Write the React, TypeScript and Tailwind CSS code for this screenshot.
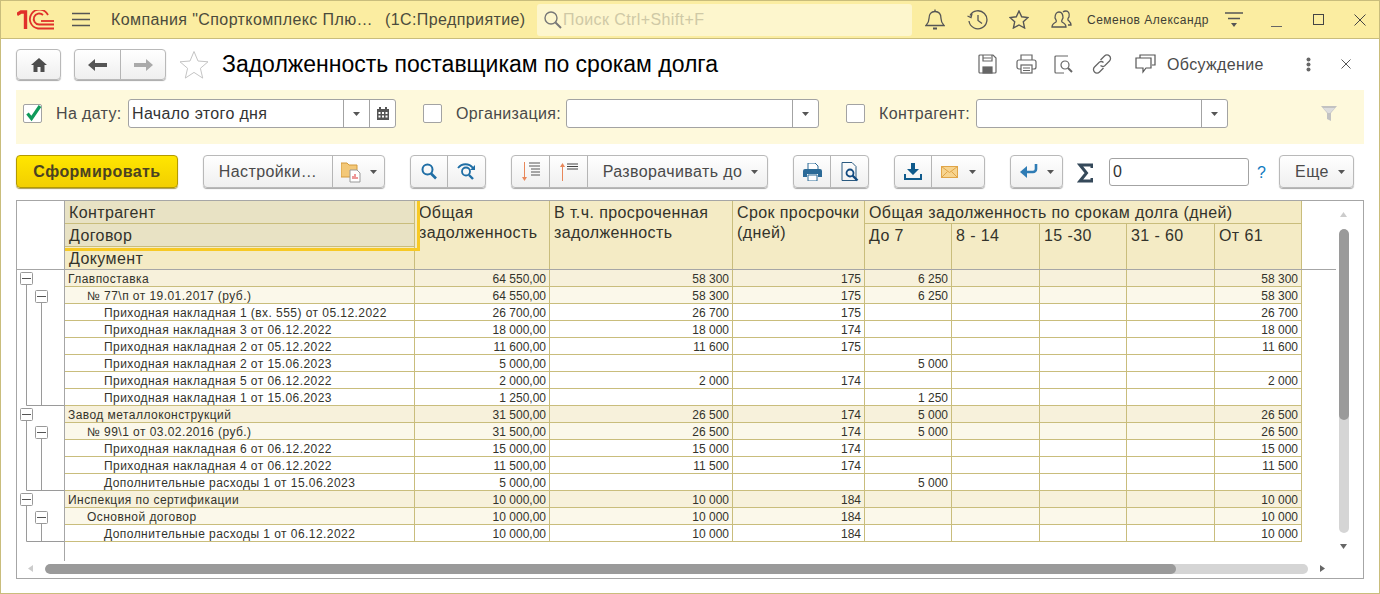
import React from "react";

const T = "font-['Liberation_Sans',Arial,sans-serif]";

type R = [number, string, string, string, string, string, string, string];
const rows: R[] = [
  [0, "Главпоставка", "64 550,00", "58 300", "175", "6 250", "", "58 300"],
  [1, "№ 77\\п от 19.01.2017 (руб.)", "64 550,00", "58 300", "175", "6 250", "", "58 300"],
  [2, "Приходная накладная 1 (вх. 555) от 05.12.2022", "26 700,00", "26 700", "175", "", "", "26 700"],
  [2, "Приходная накладная 3 от 06.12.2022", "18 000,00", "18 000", "174", "", "", "18 000"],
  [2, "Приходная накладная 2 от 05.12.2022", "11 600,00", "11 600", "175", "", "", "11 600"],
  [2, "Приходная накладная 2 от 15.06.2023", "5 000,00", "", "", "5 000", "", ""],
  [2, "Приходная накладная 5 от 06.12.2022", "2 000,00", "2 000", "174", "", "", "2 000"],
  [2, "Приходная накладная 1 от 15.06.2023", "1 250,00", "", "", "1 250", "", ""],
  [0, "Завод металлоконструкций", "31 500,00", "26 500", "174", "5 000", "", "26 500"],
  [1, "№ 99\\1 от 03.02.2016 (руб.)", "31 500,00", "26 500", "174", "5 000", "", "26 500"],
  [2, "Приходная накладная 6 от 06.12.2022", "15 000,00", "15 000", "174", "", "", "15 000"],
  [2, "Приходная накладная 4 от 06.12.2022", "11 500,00", "11 500", "174", "", "", "11 500"],
  [2, "Дополнительные расходы 1 от 15.06.2023", "5 000,00", "", "", "5 000", "", ""],
  [0, "Инспекция по сертификации", "10 000,00", "10 000", "184", "", "", "10 000"],
  [1, "Основной договор", "10 000,00", "10 000", "184", "", "", "10 000"],
  [2, "Дополнительные расходы 1 от 06.12.2022", "10 000,00", "10 000", "184", "", "", "10 000"],
];

const Caret = () => (
  <svg width="7" height="4" viewBox="0 0 7 4" className="shrink-0"><path d="M0 0h7L3.500 4z" fill="#555" /></svg>
);

function Box({ x, y }: { x: number; y: number }) {
  return (
    <g>
      <rect x={x + 0.5} y={y + 0.5} width="12" height="12" rx="1" fill="#fff" stroke="#999" />
      <path d={`M${x + 2} ${y + 6.5}h9`} stroke="#555" />
    </g>
  );
}

function Tree() {
  const groups = [
    { top: 0, n: 8 },
    { top: 8, n: 5 },
    { top: 13, n: 3 },
  ];
  return (
    <svg width="47" height="291" viewBox="0 0 47 291" className="block">
      {groups.map((g, i) => {
        const t = g.top * 17;
        const b = (g.top + g.n) * 17 - 0.5;
        return (
          <g key={i} fill="none" stroke="#9a9a9a">
            <path d={`M9.500 ${t + 14}V${b}H47`} />
            <path d={`M24.500 ${t + 31}V${b}`} />
            <Box x={3} y={t + 2} />
            <Box x={18} y={t + 20} />
          </g>
        );
      })}
    </svg>
  );
}

const Seg = ({ w, children, last }: { w: number; children: React.ReactNode; last?: boolean }) => (
  <div style={{ width: w }} className={`flex items-center justify-center h-full ${last ? "" : "border-r border-[#b5b5b5]"}`}>
    {children}
  </div>
);

const Group = ({ children, className = "" }: { children: React.ReactNode; className?: string }) => (
  <div className={`flex h-[33px] rounded-[4px] border border-[#b9b9b9] bg-linear-to-b from-white to-[#efefef] shadow-[0_1px_1px_#a8a8a8] text-[#4a4a4a] text-[16px] tracking-[.4px] whitespace-nowrap ${className}`}>
    {children}
  </div>
);

const Check = ({ on }: { on?: boolean }) => (
  <div className="relative w-[19px] h-[19px] rounded-[2px] border border-[#a3a3a3] bg-white shrink-0">
    {on && (
      <svg width="20" height="20" viewBox="0 0 20 20" className="absolute left-0 -top-[2px]">
        <path d="M3.500 10.500l4 5L16 3" fill="none" stroke="#0f9a5a" strokeWidth="3.200" />
      </svg>
    )}
  </div>
);

const Drop = () => (
  <div className="w-[26px] h-full flex items-center justify-center border-l border-[#a3a3a3]"><Caret /></div>
);

const ic = "#555";

export default function App() {
  return (
    <div className={`${T} w-[1380px] h-[594px] flex flex-col bg-white border-l border-r border-b border-[#c9bd7c] overflow-hidden`}>
      {/* top bar */}
      <div className="h-[39px] shrink-0 flex items-center bg-[#fbeda1] border-t border-b border-[#c9bd7c] relative">
        <svg width="38" height="20" viewBox="0 0 38 20" className="ml-[16px] shrink-0">
          <g fill="none" stroke="#e0312a">
            <path d="M0 4.500L4 2h4.500v17" strokeWidth="3.400" />
            <path d="M37 14.500H22A5.500 5.500 0 1 1 26 5" strokeWidth="1.800" />
            <path d="M37 18.500H21A9.500 9.500 0 1 1 31 5" strokeWidth="1.800" />
            <path d="M37 11H24" strokeWidth="1.800" />
          </g>
        </svg>
        <svg width="18" height="15" viewBox="0 0 18 15" className="ml-[17px] shrink-0"><path d="M0 1.500h18M0 7.500h18M0 13.500h18" stroke="#555" strokeWidth="1.300" /></svg>
        <span className="ml-[21px] text-[16px] tracking-[.4px] text-[#4b4b3c] w-[274px] whitespace-pre">Компания "Спорткомплекс Плю…</span>
        <span className="text-[16px] tracking-[.4px] text-[#4b4b3c] w-[141px] whitespace-pre">(1С:Предприятие)</span>
        <div className="ml-[11px] w-[375px] h-[32px] rounded-[3px] bg-[#fdf6cd] flex items-center pl-[6px]">
          <svg width="19" height="19" viewBox="0 0 19 19" fill="none" stroke="#777"><circle cx="8" cy="8" r="6" strokeWidth="1.400" /><path d="M12.500 12.500L18 18" strokeWidth="2" /></svg>
          <span className="ml-[1px] text-[16px] tracking-[.4px] text-[#cfc9a6]">Поиск Ctrl+Shift+F</span>
        </div>
        <svg width="20" height="22" viewBox="0 0 20 22" fill="none" stroke={ic} strokeWidth="1.300" className="ml-[13px]"><path d="M1 16.500c2-2 3-3 3-7 0-4 2-7 6-7s6 3 6 7c0 4 1 5 3 7z" /><path d="M8 19.500h4" strokeWidth="2" /><path d="M10 .500v2" /></svg>
        <svg width="21" height="20" viewBox="0 0 21 20" fill="none" stroke={ic} strokeWidth="1.300" className="ml-[22px]"><path d="M3 5.500A9 9 0 1 1 2 11" /><path d="M0.500 6l3.500 1.500L5 3.500" /><path d="M11 5v5.500l4 3" /></svg>
        <svg width="20" height="19" viewBox="0 0 20 19" fill="none" stroke={ic} strokeWidth="1.400" className="ml-[21px]"><path d="M10 1l2.700 5.800 6.300.7-4.700 4.300 1.300 6.200L10 15l-5.600 3 1.300-6.200L1 7.500l6.300-.7z" /></svg>
        <svg width="21" height="19" viewBox="0 0 21 19" fill="none" stroke={ic} strokeWidth="1.300" className="ml-[22px]"><path d="M1 17c0-3 2-4 4-5 1-1 0-2-1-4 0-4 2-6 4-6s4 2 4 6c-1 2-2 3-1 4 2 1 4 2 4 5z" /><path d="M12 2c1-1 2-1 3-1 2 0 4 2 3 6-1 1-2 3 0 4 1 1 2 2 2 4h-3" /></svg>
        <span className="ml-[15px] text-[12px] tracking-[.5px] text-[#3f3f36] w-[124px] whitespace-nowrap">Семенов Александр</span>
        <svg width="18" height="16" viewBox="0 0 18 16" className="ml-[14px]"><path d="M0 1h18M3 6.500h12" stroke="#555" strokeWidth="1.300" /><path d="M6 11h6l-3 4z" fill="#555" /></svg>
        <svg width="11" height="3" viewBox="0 0 11 3" className="ml-[28px] mt-[14px]"><path d="M0 1.500h11" stroke="#666" /></svg>
        <svg width="11" height="11" viewBox="0 0 11 11" className="ml-[31px]"><rect x=".5" y=".5" width="10" height="10" fill="none" stroke="#444" /></svg>
        <svg width="12" height="12" viewBox="0 0 12 12" className="ml-[30px]"><path d="M.5.500l11 11M11.500.500l-11 11" stroke="#444" /></svg>
      </div>

      {/* title */}
      <div className="h-[51px] shrink-0 pt-[10px] flex items-start pl-[15px]">
        <Group className="h-[31px]! text-[#555]"><Seg w={43} last>
          <svg width="16" height="14" viewBox="0 0 16 14"><path d="M8 0L0 7h2.500v7h4V9h3v5h4V7H16z" fill="#4d4d4d" /></svg>
        </Seg></Group>
        <Group className="h-[31px]! ml-[13px]">
          <Seg w={46}><svg width="19" height="12" viewBox="0 0 19 12"><path d="M7 0L0 6l7 6V8h12V4H7z" fill="#555" /></svg></Seg>
          <Seg w={44} last><svg width="19" height="12" viewBox="0 0 19 12"><path d="M12 0l7 6-7 6V8H0V4h12z" fill="#aaa" /></svg></Seg>
        </Group>
        <svg width="30" height="29" viewBox="0 0 30 29" className="ml-[13px] mt-[1px]"><path d="M15 1.500l4 9.500 10 .8-7.600 6.500 2.300 9.800L15 22.400l-8.700 5.700 2.300-9.800L1 11.800l10-.8z" fill="#fff" stroke="#c4c4c4" /></svg>
        <h1 className="ml-[13px] text-[23px] leading-[30px] font-normal text-black whitespace-nowrap">Задолженность поставщикам по срокам долга</h1>
        <div className="flex-1" />
        <div className="flex items-center h-[30px] text-[#555]">
          <svg width="19" height="20" viewBox="0 0 19 20" fill="none" stroke="#666" strokeWidth="1.200" className="ml-[1px]"><path d="M2 1h13l3 3v14a1 1 0 0 1-1 1H2a1 1 0 0 1-1-1V2a1 1 0 0 1 1-1z" /><path d="M5 1v6h9V1M5 4h8" /><rect x="5" y="13" width="9" height="6" fill="#666" /></svg>
          <svg width="21" height="20" viewBox="0 0 21 20" fill="none" stroke="#666" strokeWidth="1.200" className="ml-[19px]"><path d="M5 6V1h11v5" /><path d="M5 15H3a2 2 0 0 1-2-2V8a2 2 0 0 1 2-2h15a2 2 0 0 1 2 2v5a2 2 0 0 1-2 2h-2" /><rect x="5" y="11" width="11" height="8" /><path d="M7 14h7M7 16.500h7" /></svg>
          <svg width="19" height="19" viewBox="0 0 19 19" fill="none" stroke="#666" strokeWidth="1.200" className="ml-[17px]"><path d="M14 1H2a1 1 0 0 0-1 1v15a1 1 0 0 0 1 1h8" /><circle cx="11" cy="10" r="4" /><path d="M14 13l4 4" strokeWidth="2" /></svg>
          <svg width="20" height="20" viewBox="0 0 20 20" fill="none" stroke="#666" strokeWidth="1.300" className="ml-[19px]"><path d="M8.500 6l4-4a3.500 3.500 0 0 1 5 5l-5 5a3.500 3.500 0 0 1-4-.5" /><path d="M11.500 14l-4 4a3.500 3.500 0 0 1-5-5l5-5a3.500 3.500 0 0 1 4 .5" /></svg>
          <svg width="21" height="20" viewBox="0 0 21 20" fill="none" stroke="#555" strokeWidth="1.200" className="ml-[23px]"><path d="M5 4V1h15v10h-3" /><path d="M1 4h15v10h-5l-3 4v-4H1z" fill="#fff" /></svg>
          <span className="ml-[11px] mt-[1px] text-[16px] tracking-[.35px] text-[#4a4a4a] w-[96px] whitespace-nowrap">Обсуждение</span>
          <svg width="5" height="15" viewBox="0 0 5 15" className="ml-[43px]"><circle cx="2.500" cy="2.500" r="2" fill="#666" /><circle cx="2.500" cy="7.500" r="2" fill="#666" /><circle cx="2.500" cy="12.500" r="2" fill="#666" /></svg>
          <svg width="10" height="10" viewBox="0 0 10 10" className="ml-[30px] mr-[28px]"><path d="M.5.500l9 9M9.500.500l-9 9" stroke="#555" /></svg>
        </div>
      </div>

      {/* filter */}
      <div className="mx-[15px] h-[54px] shrink-0 bg-[#fef9dc] pt-[9px]">
        <div className="flex items-center h-[29px] pl-[7px] text-[16px] tracking-[.35px] text-[#4a4a4a] whitespace-nowrap">
          <Check on />
          <span className="ml-[14px] w-[72px]">На дату:</span>
          <div className="w-[268px] h-full bg-white border border-[#a3a3a3] rounded-[3px] flex items-center">
            <span className="flex-1 pl-[3px] text-[#333]">Начало этого дня</span>
            <Drop />
            <div className="w-[26px] h-full flex items-center justify-center border-l border-[#a3a3a3]">
              <svg width="12" height="13" viewBox="0 0 12 13"><path d="M0 2h12v11H0z" fill="#555" /><path d="M2 0h2v3H2zM8 0h2v3H8z" fill="#555" /><path d="M1.500 5h2v2h-2zM5 5h2v2H5zM8.500 5h2v2h-2zM1.500 8.500h2v2h-2zM5 8.500h2v2H5zM8.500 8.500h2v2h-2z" fill="#fff" /></svg>
            </div>
          </div>
          <div className="ml-[27px]"><Check /></div>
          <span className="ml-[14px] w-[110px]">Организация:</span>
          <div className="w-[253px] h-full bg-white border border-[#a3a3a3] rounded-[3px] flex items-center justify-end"><Drop /></div>
          <div className="ml-[27px]"><Check /></div>
          <span className="ml-[14px] w-[97px]">Контрагент:</span>
          <div className="w-[252px] h-full bg-white border border-[#a3a3a3] rounded-[3px] flex items-center justify-end"><Drop /></div>
          <svg width="16" height="15" viewBox="0 0 16 15" className="ml-[93px] -mt-[1px]"><path d="M0 0h16l-6 7v8l-4-2V7z" fill="#c2c2c2" /><path d="M2 2h12l-5 5H7z" fill="#ddd" /></svg>
        </div>
      </div>

      {/* toolbar */}
      <div className="mt-[11px] h-[33px] shrink-0 flex pl-[15px]">
        <button className="w-[162px] h-[33px] rounded-[4px] border border-[#b39a00] bg-linear-to-b from-[#ffe600] to-[#f2cf00] shadow-[0_1px_1px_#a89a50] text-[16px] tracking-[.45px] font-bold text-[#4a4222]">Сформировать</button>
        <Group className="ml-[25px]">
          <Seg w={129}>Настройки…</Seg>
          <Seg w={51} last>
            <div className="flex items-center gap-[9px]">
              <svg width="20" height="22" viewBox="0 0 20 22"><path d="M0 2h6l2 2h8v12H0z" fill="#f3c878" stroke="#d49a3c" /><path d="M9 9h7l3 3v9H9z" fill="#fff" stroke="#999" /><path d="M12 18v-3M14 18v-5M16 18v-2" stroke="#d33" /></svg>
              <Caret />
            </div>
          </Seg>
        </Group>
        <Group className="ml-[25px]">
          <Seg w={37}><svg width="16" height="17" viewBox="0 0 16 17" fill="none" stroke="#1f6ea5" strokeWidth="2"><circle cx="6.500" cy="6.500" r="5" /><path d="M10 10.500l5 5" strokeWidth="2.600" /></svg></Seg>
          <Seg w={37} last><svg width="19" height="17" viewBox="0 0 19 17" fill="none" stroke="#1f6ea5" strokeWidth="1.800"><circle cx="9" cy="8.500" r="4" /><path d="M12 12l4 4" strokeWidth="2.400" /><path d="M1 5c4-5 11-5 15 0" /><path d="M18 2v5h-5z" fill="#1f6ea5" stroke="none" /></svg></Seg>
        </Group>
        <Group className="ml-[25px]">
          <Seg w={38}><svg width="20" height="20" viewBox="0 0 20 20"><path d="M3.500 0v17" stroke="#e8875a" /><path d="M1 15h5l-2.500 4z" fill="#e8875a" /><path d="M8 1h11M8 4h11M10 7h9M10 10h9M10 13h9" stroke="#555" /></svg></Seg>
          <Seg w={38}><svg width="20" height="18" viewBox="0 0 20 18"><path d="M3.500 3v15" stroke="#e8875a" /><path d="M1 4h5L3.500 0z" fill="#e8875a" /><path d="M8 1h11M8 3.500h11M8 6h11" stroke="#444" /></svg></Seg>
          <Seg w={179} last>
            <div className="flex items-center gap-[9px] pl-[6px]"><span>Разворачивать до</span><Caret /></div>
          </Seg>
        </Group>
        <Group className="ml-[25px]">
          <Seg w={37}><svg width="19" height="18" viewBox="0 0 19 18"><path d="M5 0h7l3 3v4H5z" fill="#fff" stroke="#2b6a97" /><path d="M2 6h15a2 2 0 0 1 2 2v6h-4v-3H4v3H0V8a2 2 0 0 1 2-2z" fill="#2b6a97" /><path d="M5 12h9v6H5z" fill="#fff" stroke="#2b6a97" /></svg></Seg>
          <Seg w={37} last><svg width="18" height="20" viewBox="0 0 18 20" fill="none"><path d="M1 .500h10l4 4v14H1z" stroke="#2b5a80" /><circle cx="9" cy="11" r="3.500" stroke="#114a80" strokeWidth="1.800" /><path d="M11.500 13.500l5 5" stroke="#114a80" strokeWidth="2.400" /></svg></Seg>
        </Group>
        <Group className="ml-[25px]">
          <Seg w={37}><svg width="18" height="17" viewBox="0 0 18 17"><path d="M7 0h4v6h4l-6 6-6-6h4z" fill="#0f5a8c" /><path d="M1 11v5h16v-5" fill="none" stroke="#0f5a8c" strokeWidth="2" /></svg></Seg>
          <Seg w={52} last>
            <div className="flex items-center gap-[11px]">
              <svg width="17" height="12" viewBox="0 0 17 12"><rect x=".5" y=".5" width="16" height="11" fill="#f7d48f" stroke="#e0a548" /><path d="M.5.500l8 6 8-6M.5 11.500l6-6M16.500 11.500l-6-6" fill="none" stroke="#e0a548" /></svg>
              <Caret />
            </div>
          </Seg>
        </Group>
        <Group className="ml-[25px]">
          <Seg w={51} last>
            <div className="flex items-center gap-[9px]">
              <svg width="18" height="15" viewBox="0 0 18 15" fill="none"><path d="M16 0v5a3 3 0 0 1-3 3H5" stroke="#2f7cb5" strokeWidth="2.600" /><path d="M7 2L0 8l7 6z" fill="#2f7cb5" /></svg>
              <Caret />
            </div>
          </Seg>
        </Group>
        <svg width="16" height="20" viewBox="0 0 16 20" className="ml-[14px] mt-[8px]"><path d="M15 5V2H3l6.500 8L3 18h12v-3" fill="none" stroke="#35495a" strokeWidth="3" /></svg>
        <div className="ml-[16px] mt-[3px] w-[140px] h-[28px] border border-[#a3a3a3] rounded-[3px] bg-white flex items-center pl-[3px] text-[16px] text-[#333]">0</div>
        <span className="ml-[8px] mt-[6px] text-[16px] font-normal text-[#0f7ac0] w-[22px]">?</span>
        <Group>
          <Seg w={73} last>
            <div className="flex items-center gap-[9px] pl-[7px]"><span>Еще</span><Caret /></div>
          </Seg>
        </Group>
      </div>

      {/* report */}
      <div className="mt-[12px] mx-[15px] h-[379px] shrink-0 border border-[#a6a6a6] flex flex-col text-[#33332b]">
        <div className="flex-1 flex min-h-0">
          <div className="w-[1319px] flex flex-col">
            {/* header */}
            <div className="relative h-[69px] border-b border-[#a6a6a6] grid grid-cols-[48px_350px_135px_183px_132px_87px_88px_87px_88px_87px] grid-rows-[23px_23px_22px] text-[16px] tracking-[.4px] leading-[20px] w-[1285px] box-content pr-[34px] whitespace-nowrap">
              <div className="row-span-3 border-r border-[#a6a6a6]" />
              <div className="bg-[#e8e2c4] border-b border-r border-[#c9bd7c] pl-[4px] pt-[2px]">Контрагент</div>
              <div className="row-span-3 bg-[#f4ebc5] border-r border-[#c9bd7c] pl-[4px] pt-[2px]">Общая<br />задолженность</div>
              <div className="row-span-3 bg-[#f4ebc5] border-r border-[#c9bd7c] pl-[4px] pt-[2px]">В т.ч. просроченная<br />задолженность</div>
              <div className="row-span-3 bg-[#f4ebc5] border-r border-[#c9bd7c] pl-[4px] pt-[2px]">Срок просрочки<br />(дней)</div>
              <div className="col-span-5 bg-[#f4ebc5] border-b border-r border-[#c9bd7c] pl-[4px] pt-[2px]">Общая задолженность по срокам долга (дней)</div>
              <div className="bg-[#e8e2c4] border-b border-r border-[#c9bd7c] pl-[4px] pt-[2px] col-start-2 row-start-2">Договор</div>
              {["До 7", "8 - 14", "15 -30", "31 - 60", "От 61"].map((t) => (
                <div key={t} className="row-span-2 bg-[#f4ebc5] border-r border-[#c9bd7c] pl-[4px] pt-[2px]">{t}</div>
              ))}
              <div className="bg-[#f4ebc5] border-r border-[#c9bd7c] pl-[4px] pt-[2px] col-start-2 row-start-3">Документ</div>
              <div className="absolute left-[48px] top-0 w-[355px] h-[50px] border-r-[3px] border-b-[3px] border-[#f7c925] pointer-events-none" />
            </div>
            {/* body */}
            <div className="flex">
              <div className="w-[48px] h-[291px] border-r border-[#a6a6a6] shrink-0"><Tree /></div>
              <div className="flex flex-col">
                {rows.map((r, i) => {
                  const bg = r[0] === 0 ? "bg-[#f7f1db]" : r[0] === 1 ? "bg-[#fbf8ea]" : "bg-white";
                  const pad = r[0] === 0 ? "pl-[3px]" : r[0] === 1 ? "pl-[22px]" : "pl-[39px]";
                  const c = "border-r border-[#c9bd7c] text-right pr-[3px]";
                  return (
                    <div key={i} className={`grid grid-cols-[350px_135px_183px_132px_87px_88px_87px_88px_87px] grid-rows-[16px] h-[17px] border-b border-[#c9bd7c] text-[12px] leading-[18px] ${bg}`}>
                      <div className={`border-r border-[#c9bd7c] whitespace-nowrap tracking-[.45px] ${pad}`}>{r[1]}</div>
                      <div className={c}>{r[2]}</div>
                      <div className={c}>{r[3]}</div>
                      <div className={c}>{r[4]}</div>
                      <div className={c}>{r[5]}</div>
                      <div className={c} />
                      <div className={c} />
                      <div className={c} />
                      <div className={c}>{r[7]}</div>
                    </div>
                  );
                })}
              </div>
            </div>
          </div>
          {/* vertical scrollbar */}
          <div className="w-[17px] flex flex-col items-center pr-[2px] pt-[11px]">
            <svg width="7" height="5" viewBox="0 0 7 5"><path d="M3.500 0L7 5H0z" fill="#ccc" /></svg>
            <div className="mt-[12px] w-[10px] h-[304px] rounded-full bg-[#d5d5d5] overflow-hidden"><div className="w-full h-[191px] rounded-full bg-[#9a9a9a]" /></div>
            <svg width="7" height="5" viewBox="0 0 7 5" className="mt-[11px]"><path d="M0 0h7L3.500 5z" fill="#666" /></svg>
          </div>
        </div>
        {/* horizontal scrollbar */}
        <div className="h-[17px] shrink-0 flex items-center pl-[11px] pb-[2px]">
          <svg width="5" height="7" viewBox="0 0 5 7"><path d="M5 0v7L0 3.500z" fill="#ccc" /></svg>
          <div className="ml-[12px] w-[1263px] h-[10px] rounded-full bg-[#d5d5d5] overflow-hidden"><div className="h-full w-[1131px] rounded-full bg-[#9a9a9a]" /></div>
          <svg width="5" height="7" viewBox="0 0 5 7" className="ml-[12px]"><path d="M0 0v7l5-3.500z" fill="#666" /></svg>
        </div>
      </div>
    </div>
  );
}
